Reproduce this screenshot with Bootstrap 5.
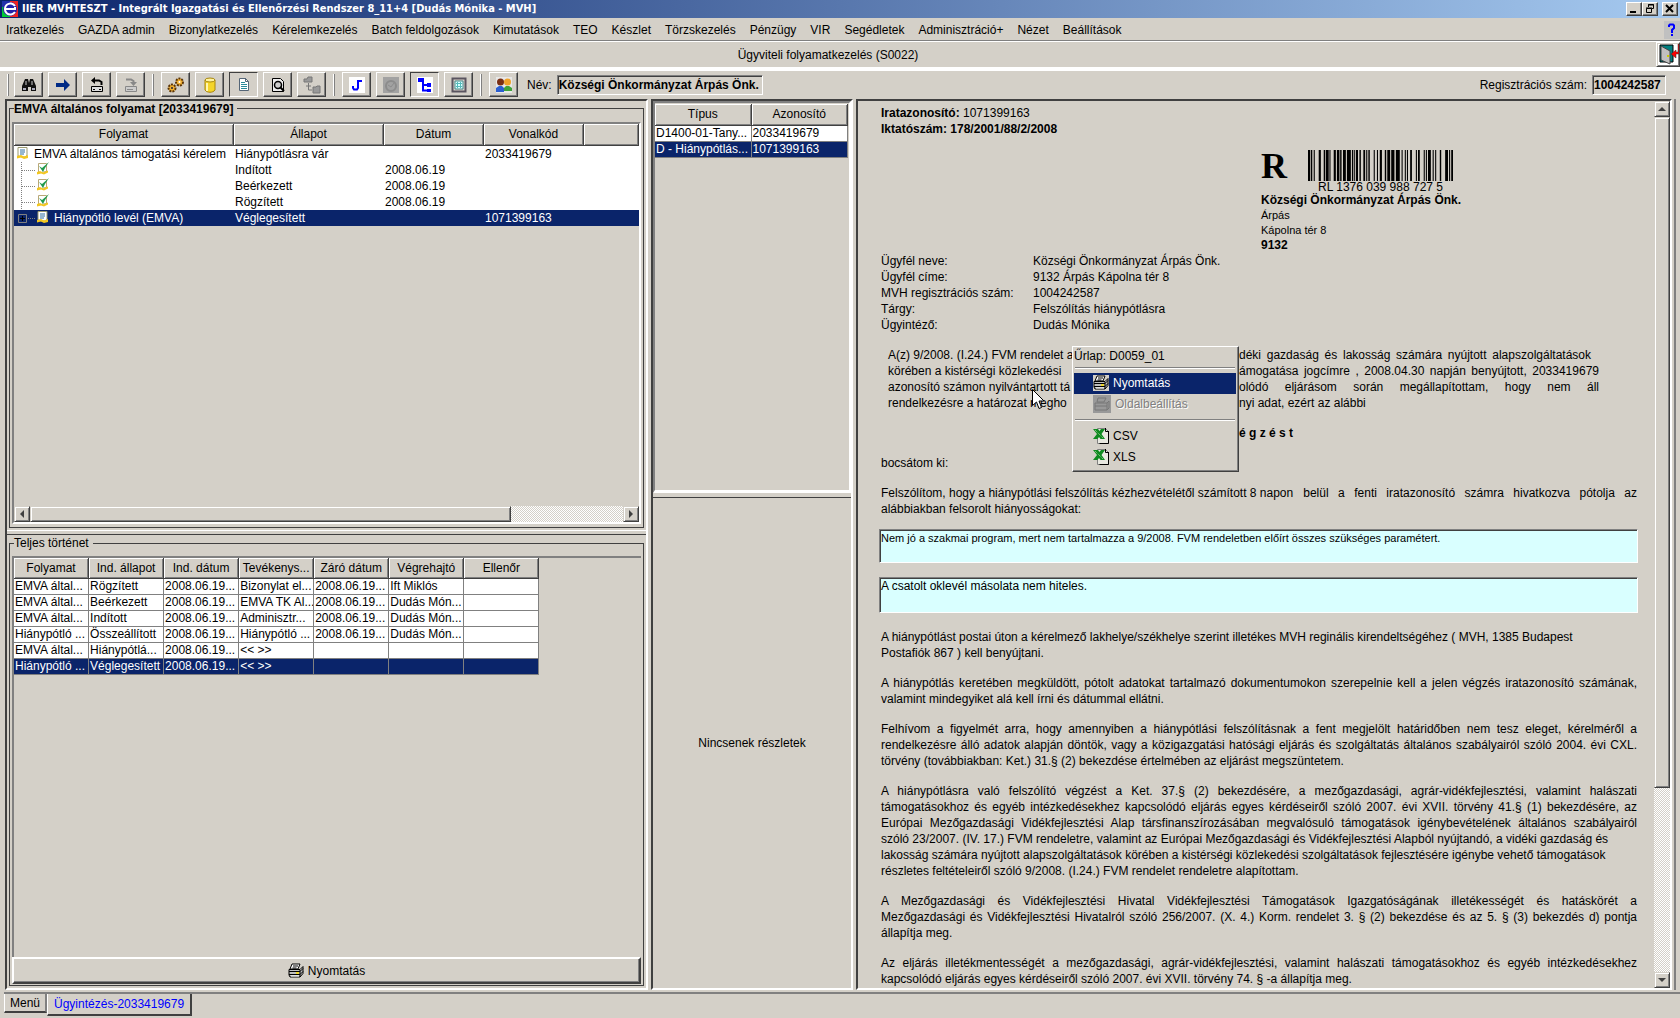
<!DOCTYPE html>
<html lang="hu">
<head>
<meta charset="utf-8">
<meta name="viewport" content="width=device-width, initial-scale=1">
<title>IIER MVHTESZT - Integrált Igazgatási és Ellenőrzési Rendszer</title>
<link href="https://cdn.jsdelivr.net/npm/bootstrap@5.3.0/dist/css/bootstrap.min.css" rel="stylesheet">
<style>
:root{--face:#d4d0c8;--dk:#404040;--sh:#808080;--sel:#0a246a}
body{background:var(--face);color:#000;font:12px/16px "Liberation Sans",Arial,sans-serif;cursor:default}
button,input{font:inherit;color:inherit;border-radius:0}
svg{display:block;flex:none}
a{color:inherit;text-decoration:none}
.titlebar{height:18px;background:linear-gradient(90deg,#0a246a,#a6caf0);color:#fff;font:bold 11px/18px "DejaVu Sans Condensed","DejaVu Sans",sans-serif;padding:0 2px}
.winbtn{width:16px;height:14px;padding:0;background:var(--face);border:1px solid;border-color:#fff var(--dk) var(--dk) #fff;box-shadow:inset -1px -1px var(--sh)}
.menubar{height:24px;padding-left:6px;border-bottom:1px solid #fff;box-shadow:inset 0 -1px var(--sh)}
.menubar nav{gap:14px}
.helpbtn{width:16px;height:18px;padding:0;border:0;background:#c0c0c0}
.subbar{height:29px;border-bottom:4px solid #fff}
.exitbtn{width:24px;height:25px;padding:0;background:#fff;border:1px solid;border-color:#fff var(--dk) var(--dk) #fff;box-shadow:inset 1px 1px var(--face),inset -1px -1px var(--sh)}
.toolbar{height:28px;margin:0 10px 0 7px;gap:5px}
.grip{width:2px;height:22px;border-left:1px solid #fff;border-right:1px solid var(--sh)}
.grip.mid{margin:0 2px}
.tbtn{width:29px;height:25px;padding:0;background:var(--face);border:1px solid;border-color:#fff var(--dk) var(--dk) #fff;box-shadow:inset -1px -1px var(--sh)}
.tbtn.down{border-color:var(--dk) #fff #fff var(--dk);box-shadow:none}
.sunk{border:1px solid;border-color:var(--sh) #fff #fff var(--sh);box-shadow:inset 1px 1px var(--dk)}
.roinput{height:20px;background:var(--face);font-weight:bold;padding:0 1px;min-width:0;outline:0}
.workarea{display:grid;grid-template-columns:minmax(0,643fr) minmax(0,202fr) minmax(0,816fr);column-gap:3px;margin:0 4px 0 5px;padding-right:2px;border-right:2px solid var(--sh);min-height:0}
.pane{border:2px solid;border-color:var(--dk) #fff #fff var(--dk);min-height:0;min-width:0}
.leftcol{display:grid;grid-template-rows:minmax(0,430fr) minmax(0,456fr)}
.leftcol .upper{border-bottom:1px solid #fff;padding:0 2px 2px}
.leftcol .upper fieldset{padding-bottom:3px}
.leftcol .lower{border-top:1px solid var(--dk);margin-top:3px;padding:0 2px 2px}
fieldset{border:1px solid var(--dk)!important;padding:0 2px 1px}
fieldset legend{float:none;width:auto;font-size:12px;line-height:16px;margin:0 0 5px 2px;padding:0 4px 0 0}
.well{border:2px solid;border-color:var(--sh) #fff #fff var(--sh);min-height:0}
.well.thin{border-width:2px 0 0 2px}
table{border-collapse:separate;border-spacing:0;table-layout:fixed}
th{height:21px;padding:0;font-weight:normal;text-align:center;white-space:nowrap;overflow:hidden;background:var(--face);border-right:1px solid var(--dk);border-bottom:1px solid var(--dk);box-shadow:inset 1px 1px #fff,inset -1px -1px var(--sh)}
td{height:16px;line-height:16px;padding:0 1px;background:#fff;white-space:nowrap;overflow:hidden}
tr.picked td{background:var(--sel);color:#fff}
.lined td{border-right:1px solid var(--sh);border-bottom:1px solid var(--sh);padding:0 0 0 1px;line-height:15px}
.tree th{height:22px}
.scr{background:repeating-conic-gradient(#fff 0 25%,var(--face) 0 50%) 0 0/2px 2px}
.sbtn,.thumb{background:var(--face);border:1px solid;border-color:var(--face) var(--dk) var(--dk) var(--face);box-shadow:inset 1px 1px #fff,inset -1px -1px var(--sh)}
.sbtn{width:16px;height:16px;padding:0}
.widebtn{height:27px;background:var(--face);border:2px solid;border-color:#fff var(--dk) var(--dk) #fff;box-shadow:inset -1px -1px var(--sh);padding:0;gap:4px}
.midcol{display:grid;grid-template-rows:minmax(0,392fr) minmax(0,495fr)}
.midcol .top{border:2px solid;border-color:var(--sh) #fff #fff var(--sh);border-bottom-width:3px;padding:1px 1px 0 0}
.midcol .top td{height:16px}
.midcol .top th{height:22px}
.midcol .bottom{border-top:1px solid var(--dk);margin-top:4px}
.sheet{padding:4px 17px 0 23px;overflow:hidden}
.sheet p{margin:0 0 14px}
.sheet .ln{display:block;white-space:nowrap}
.sheet .jl{display:block;text-align:justify;text-align-last:justify}
.sheet .inset{margin:0 38px 14px 7px}
.sheet .tail{width:360px;flex:none}
.address{margin-left:380px;margin-top:13px;line-height:15px;height:100px}
.bigr{font:bold 36px/32px "Liberation Serif","Times New Roman",serif;width:47px}
.sm11{font-size:11px}
dl.facts{display:grid;grid-template-columns:152px 1fr;margin:3px 0 14px}
dl.facts dt,dl.facts dd{margin:0;font-weight:normal}
.note{display:block;resize:none;overflow:hidden;background:#d9ffff;margin:0 -1px 14px -2px;width:calc(100% + 3px);height:34px;padding:0 1px;outline:0;line-height:16px}
.note.tall{height:36px;margin-bottom:16px}
.popmenu{left:214px;top:245px;width:167px;background:var(--face);border:1px solid;border-color:#fff var(--dk) var(--dk) #fff;box-shadow:inset -1px -1px var(--sh);padding:1px 2px 3px 1px;z-index:3}
.popmenu hr{margin:3px 1px;border:0;border-top:1px solid var(--sh);border-bottom:1px solid #fff;opacity:1}
.popmenu hr.wide{margin:4px 1px 5px}
.popmenu button{width:100%;height:21px;border:0;background:none;padding:0 0 0 19px;gap:4px}
.popmenu .hot{background:var(--sel);color:#fff}
.popmenu .off{color:var(--sh);text-shadow:1px 1px #fff}
.pointer{left:174px;top:288px;z-index:4}
.tabs{height:26px;margin-left:4px;border-top:2px solid var(--sh);margin-top:2px}
.tab{background:var(--face);border:solid;border-width:0 2px 2px 1px;border-color:var(--dk) var(--sh) var(--dk) #fff;padding:0 5px;height:19px}
.tab.on{height:22px;color:#00f;border-right-color:var(--dk);line-height:20px;padding:0 6px}
</style>
</head>
<body class="vh-100 d-flex flex-column overflow-hidden">
<svg width="0" height="0" class="position-absolute" aria-hidden="true">
 <symbol id="page" viewBox="0 0 11 12"><path d="M1 .5h9v8l-2 1.500H5L1 9z" fill="#fff" stroke="#9a9a70"/><path d="M3 3h5M3 5h5M3 7h4" stroke="#2f6fa0"/><path d="M0 9l4-1 3 1.500 4-1.500v3l-4 1-3-1.500-4 1z" fill="#f3c720"/></symbol>
 <symbol id="tick" viewBox="0 0 12 13"><path d="M1.500 1.500h8v8l-3 .5-5 1z" fill="#fff" stroke="#b9a878"/><path d="M0 10l3-1 3 1.500 5-2v2l-4 2-3-1-4 1z" fill="#f3c720"/><path d="M2 4l3 2 7-6-4 6-2 4z" fill="#1f9a4c"/></symbol>
 <symbol id="printer" viewBox="0 0 16 16"><path d="M4 1h8l-2 5H2z" fill="#fff" stroke="#000"/><path d="M5 3h5M4.500 5h4" stroke="#000"/><path d="M1 6.500h11l3-3v7l-3 3.500H2l-1-2z" fill="#c0c0c0" stroke="#000"/><path d="M1 8.500h11l3-3M1 11.500h11l3-3M12 7v7" stroke="#000" fill="none"/><path d="M3 13h8" stroke="#fff"/><path d="M8 10h3" stroke="#ffe000" stroke-width="1.500"/></symbol>
 <symbol id="excel" viewBox="0 0 16 16"><path d="M4.500.5h8l3 3v12h-11z" fill="#e8e8e0" stroke="#808080"/><path d="M15.500 3v12.500h-9M12.500 0v3.500h3" stroke="#000" fill="none"/><path d="M0 1h5l1.500 2L8 1h4L8.500 6l3.500 5H7.500L6 9l-1.500 2H0l4-5z" fill="#0f8a20"/><path d="M2 2l8 8" stroke="#9fd59a" stroke-dasharray="1 1"/></symbol>
</svg>

<header>
 <div class="titlebar d-flex align-items-center">
  <svg width="16" height="16" viewBox="0 0 16 16"><path d="M0 0h8v16H0z" fill="#0c3"/><path d="M8 0h8v16H8z" fill="#e22"/><path d="M0 0h8v6H0z" fill="#23a"/><circle cx="8" cy="8" r="7" fill="#22a"/><path d="M13 5A5.500 5.500 0 1 0 13 11M3 8h10V6" stroke="#fff" stroke-width="2" fill="none"/></svg>
  <span class="flex-grow-1 ps-1">IIER MVHTESZT - Integrált Igazgatási és Ellenőrzési Rendszer 8_11+4 [Dudás Mónika - MVH]</span>
  <button class="winbtn" aria-label="Kis méret"><svg width="14" height="12"><path d="M3 9h6" stroke="#000" stroke-width="2"/></svg></button>
  <button class="winbtn" aria-label="Előző méret"><svg width="14" height="12"><path d="M5.500 4V1.500h5v4H9M5 2h6M3.500 5.500h5v4h-5zM3 5h6" stroke="#000" fill="none"/></svg></button>
  <button class="winbtn ms-1" aria-label="Bezárás"><svg width="14" height="12"><path d="M3 2l7 7M10 2l-7 7" stroke="#000" stroke-width="2"/></svg></button>
 </div>
 <div class="menubar d-flex align-items-center justify-content-between">
  <nav class="d-flex"><a href="#">Iratkezelés</a><a href="#">GAZDA admin</a><a href="#">Bizonylatkezelés</a><a href="#">Kérelemkezelés</a><a href="#">Batch feldolgozások</a><a href="#">Kimutatások</a><a href="#">TEO</a><a href="#">Készlet</a><a href="#">Törzskezelés</a><a href="#">Pénzügy</a><a href="#">VIR</a><a href="#">Segédletek</a><a href="#">Adminisztráció+</a><a href="#">Nézet</a><a href="#">Beállítások</a></nav>
  <button class="helpbtn" aria-label="Súgó"><svg width="16" height="18"><path d="M5 6V4.500l1-1h3l1 1V7L8 9v3M8 13v2" stroke="#00f" stroke-width="2" fill="none"/></svg></button>
 </div>
 <div class="subbar d-flex align-items-center">
  <div class="flex-grow-1 text-center">Ügyviteli folyamatkezelés (S0022)</div>
  <button class="exitbtn" aria-label="Kilépés"><svg width="22" height="23"><path d="M3 2h13v17H3z" fill="#008080" stroke="#000"/><path d="M4 3l9 5v13l-9-4z" fill="#c0c0c0" stroke="#444"/><path d="M10 13h2" stroke="#cc0" stroke-width="2"/><path d="M14 11l5-4v2h2V1h1v10h-3v4z" fill="#f00" stroke="#333" stroke-width=".5"/></svg></button>
 </div>
</header>

<div class="toolbar d-flex align-items-center" role="toolbar">
 <span class="grip"></span>
 <button class="tbtn" aria-label="Keresés"><svg class="m-auto" width="16" height="16"><path d="M4 2h3l1 4 1-4h3l3 7v5h-5v-4H7v4H1V9z" fill="#111"/><path d="M2 11h3v2H2zM11 11h3v2h-3z" fill="#aab"/><path d="M5 4v4M11 4v4" stroke="#ccc"/></svg></button>
 <button class="tbtn" aria-label="Tovább"><svg class="m-auto" width="16" height="16"><path d="M1 6h8V2l6 6-6 6v-4H1z" fill="#002a86"/></svg></button>
 <button class="tbtn" aria-label="Betöltés"><svg class="m-auto" width="16" height="16"><path d="M2.500 9.500h11v5h-11z" fill="#ddd" stroke="#000"/><path d="M12.500 8V5L10 3.500H5" stroke="#000" stroke-width="2" fill="none"/><path d="M6 0v7L2 3.500z"/><path d="M4 12.500h2M10 12.500h2" stroke="#000"/></svg></button>
 <button class="tbtn" aria-label="Mentés" disabled><svg class="m-auto" width="16" height="16"><path d="M2.500 9.500h11v5h-11z" fill="#ccc" stroke="#888"/><path d="M3 2.500h5L10.500 4v2" stroke="#888" stroke-width="2" fill="none"/><path d="M7 5h7l-3.500 4z" fill="#888"/><path d="M4 12.500h6" stroke="#888"/></svg></button>
 <span class="grip mid"></span>
 <button class="tbtn" aria-label="Műveletek"><svg class="m-auto" width="18" height="16"><g fill="#f0b030" stroke="#5a3408"><circle cx="12.500" cy="5" r="3.500" stroke-width="2" stroke-dasharray="2 1"/><circle cx="5" cy="11" r="3.500" stroke-width="2" stroke-dasharray="2 1"/></g><circle cx="12.500" cy="5" r="1" fill="#fff"/><circle cx="5" cy="11" r="1" fill="#223"/></svg></button>
 <button class="tbtn" aria-label="Adattár"><svg class="m-auto" width="16" height="16"><path d="M3 3v10c2 3 8 3 10 0V3z" fill="#f5d52a" stroke="#a8860c"/><ellipse cx="8" cy="3" rx="5" ry="2" fill="#fff3a0" stroke="#a8860c"/><path d="M5 6v8" stroke="#fff6b0" stroke-width="2"/></svg></button>
 <button class="tbtn down" aria-label="Dokumentum"><svg class="m-auto" width="16" height="16"><path d="M3.500 1.500h6l3 3v9h-9z" fill="#fff" stroke="#567"/><path d="M5 5.500h4M5 7.500h6M5 9.500h6M5 11.500h6" stroke="#2a8a9a"/><path d="M9.500 1v3.500h3" stroke="#567" fill="none"/></svg></button>
 <button class="tbtn" aria-label="Előnézet"><svg class="m-auto" width="16" height="16"><path d="M2.500 1.500h8l3 3v10h-11z" fill="#eee" stroke="#000"/><circle cx="8" cy="8" r="3.500" fill="#ccc" stroke="#000" stroke-width="1.500"/><path d="M10 10l4 4" stroke="#000" stroke-width="2"/></svg></button>
 <button class="tbtn" aria-label="Kapcsolatok" disabled><svg class="m-auto" width="18" height="18"><path d="M1 3h3l1-2h4v5H1zM10 11h3l1-1h3v7h-7z" fill="#999" stroke="#777"/><path d="M5.500 7v7H9M3 10h5" stroke="#777" fill="none"/></svg></button>
 <span class="grip mid"></span>
 <button class="tbtn" aria-label="Folyamatlépés"><svg class="m-auto" width="16" height="16"><path d="M0 0h16v16H0z" fill="#fff"/><path d="M13 4H9v7l-1 1.500H5L4 11V9" stroke="#00f" stroke-width="2" fill="none"/></svg></button>
 <button class="tbtn" aria-label="Határidő" disabled><svg class="m-auto" width="16" height="16"><path d="M0 0h16v16H0z" fill="#a2a2a2"/><circle cx="8" cy="9" r="5" fill="none" stroke="#8c8c8c" stroke-width="2"/><path d="M5 8l3 2 3-4" stroke="#8c8c8c" fill="none"/></svg></button>
 <button class="tbtn down" aria-label="Fa nézet"><svg class="m-auto" width="16" height="16"><path d="M0 0h16v16H0z" fill="#fff"/><path d="M1 1h6v4H1zM10 6h4v4h-4zM10 12h4v3h-4z" fill="#00f"/><path d="M6 4v9.500h4M6 8h4" stroke="#00f" stroke-width="2" fill="none"/></svg></button>
 <button class="tbtn" aria-label="Táblázat"><svg class="m-auto" width="16" height="16"><path d="M1.500 1.500h13v13h-13z" fill="#d8d0c8" stroke="#5a5560" stroke-width="2"/><path d="M4 4h8v8H4z" fill="#d9ffff" stroke="#488"/><path d="M5 6.500h6M5 9.500h6M6.500 5v6M9.500 5v6" stroke="#5bb"/></svg></button>
 <span class="grip mid"></span>
 <button class="tbtn" aria-label="Ügyfelek"><svg class="m-auto" width="16" height="16"><path d="M0 0h16v16H0z" fill="#e8e8e8"/><circle cx="4.500" cy="5" r="3.500" fill="#7a2f14"/><circle cx="11.500" cy="5" r="3.500" fill="#f0a22a"/><path d="M0 15v-4l3-2h3l2 2v4z" fill="#2c5fd0"/><path d="M8 14v-3l2-2h3l3 2v3z" fill="#3fa33a"/></svg></button>
 <label for="nev" class="ps-1">Név:</label>
 <input id="nev" class="roinput sunk" size="28" style="width:206px" readonly value="Községi Önkormányzat Árpás Önk.">
 <label for="reg" class="ms-auto">Regisztrációs szám:</label>
 <input id="reg" class="roinput sunk me-1" size="10" style="width:74px" readonly value="1004242587">
</div>

<main class="workarea flex-grow-1">
 <section class="pane leftcol">
  <div class="upper d-flex">
   <fieldset class="flex-grow-1 d-flex flex-column">
    <legend class="fw-bold">EMVA általános folyamat [2033419679]</legend>
    <div class="well flex-grow-1 d-flex flex-column">
     <table class="tree w-100">
      <colgroup><col style="width:35.200%"><col style="width:24%"><col style="width:16%"><col style="width:16%"><col></colgroup>
      <thead><tr><th>Folyamat</th><th>Állapot</th><th>Dátum</th><th>Vonalkód</th><th></th></tr></thead>
      <tbody>
       <tr><td><div class="d-flex"><svg width="19" height="16"><use href="#page" x="2" y="1" width="11" height="12"/></svg>EMVA általános támogatási kérelem</div></td><td>Hiánypótlásra vár</td><td></td><td>2033419679</td><td></td></tr>
       <tr><td><svg width="36" height="16"><path d="M6.500 0v16M7 8.500h14" stroke="#808080" stroke-dasharray="1 1"/><use href="#tick" x="22" y="0" width="12" height="13"/></svg></td><td>Indított</td><td>2008.06.19</td><td></td><td></td></tr>
       <tr><td><svg width="36" height="16"><path d="M6.500 0v16M7 8.500h14" stroke="#808080" stroke-dasharray="1 1"/><use href="#tick" x="22" y="0" width="12" height="13"/></svg></td><td>Beérkezett</td><td>2008.06.19</td><td></td><td></td></tr>
       <tr><td><svg width="36" height="16"><path d="M6.500 0v16M7 8.500h14" stroke="#808080" stroke-dasharray="1 1"/><use href="#tick" x="22" y="0" width="12" height="13"/></svg></td><td>Rögzített</td><td>2008.06.19</td><td></td><td></td></tr>
       <tr class="picked"><td><div class="d-flex"><svg width="39" height="16"><path d="M3.500 4.500h8v8h-8z" fill="#0a246a" stroke="#808080"/><path d="M5 8.500h5M7.500 6v5" stroke="#000" fill="none"/><path d="M13 8.500h8" stroke="#808080" stroke-dasharray="1 1"/><use href="#page" x="22" y="1" width="11" height="12"/></svg>Hiánypótló levél (EMVA)</div></td><td>Véglegesített</td><td></td><td>1071399163</td><td></td></tr>
      </tbody>
     </table>
     <div class="scr mt-auto d-flex">
      <button class="sbtn" aria-label="Balra"><svg width="14" height="14"><path d="M9 3v8L5 7z" fill="#404040"/></svg></button>
      <div class="thumb" style="width:77%"></div>
      <button class="sbtn ms-auto" aria-label="Jobbra"><svg width="14" height="14"><path d="M5 3v8l4-4z" fill="#404040"/></svg></button>
     </div>
    </div>
   </fieldset>
  </div>
  <div class="lower d-flex">
   <fieldset class="flex-grow-1 d-flex flex-column">
    <legend>Teljes történet</legend>
    <div class="well thin flex-grow-1">
     <table class="lined" style="width:83.800%">
      <thead><tr><th>Folyamat</th><th>Ind. állapot</th><th>Ind. dátum</th><th>Tevékenys...</th><th>Záró dátum</th><th>Végrehajtó</th><th>Ellenőr</th></tr></thead>
      <tbody>
       <tr><td>EMVA által...</td><td>Rögzített</td><td>2008.06.19...</td><td>Bizonylat el...</td><td>2008.06.19...</td><td>Ift Miklós</td><td></td></tr>
       <tr><td>EMVA által...</td><td>Beérkezett</td><td>2008.06.19...</td><td>EMVA TK Al...</td><td>2008.06.19...</td><td>Dudás Món...</td><td></td></tr>
       <tr><td>EMVA által...</td><td>Indított</td><td>2008.06.19...</td><td>Adminisztr...</td><td>2008.06.19...</td><td>Dudás Món...</td><td></td></tr>
       <tr><td>Hiánypótló ...</td><td>Összeállított</td><td>2008.06.19...</td><td>Hiánypótló ...</td><td>2008.06.19...</td><td>Dudás Món...</td><td></td></tr>
       <tr><td>EMVA által...</td><td>Hiánypótlá...</td><td>2008.06.19...</td><td>&lt;&lt; &gt;&gt;</td><td></td><td></td><td></td></tr>
       <tr class="picked"><td>Hiánypótló ...</td><td>Véglegesített</td><td>2008.06.19...</td><td>&lt;&lt; &gt;&gt;</td><td></td><td></td><td></td></tr>
      </tbody>
     </table>
    </div>
    <button class="widebtn w-100 d-flex align-items-center justify-content-center"><svg width="16" height="16"><use href="#printer"/></svg>Nyomtatás</button>
   </fieldset>
  </div>
 </section>

 <section class="pane midcol">
  <div class="top">
   <table class="w-100 lined">
    <thead><tr><th>Típus</th><th>Azonosító</th></tr></thead>
    <tbody><tr><td>D1400-01-Tany...</td><td>2033419679</td></tr><tr class="picked"><td>D - Hiánypótlás...</td><td>1071399163</td></tr></tbody>
   </table>
  </div>
  <div class="bottom d-flex align-items-center justify-content-center">Nincsenek részletek</div>
 </section>

 <section class="pane d-flex position-relative">
  <article class="sheet flex-grow-1">
   <div><b>Iratazonosító:</b> 1071399163<br><b>Iktatószám: 178/2001/88/2/2008</b></div>
   <div class="address">
    <div class="d-flex">
     <div class="bigr">R</div>
     <div>
      <svg width="145" height="31" viewBox="524 0 406 10" preserveAspectRatio="none"><path d="M524 0h6v10h-6zM532 0h4v10h-4zM540 0h3v10h-3zM554 0h6v10h-6zM568 0h4v10h-4zM574 0h8v10h-8zM584 0h3v10h-3zM596 0h6v10h-6zM605 0h7v10h-7zM614 0h4v10h-4zM622 0h8v10h-8zM633 0h11v10h-11zM647 0h3v10h-3zM652 0h3v10h-3zM658 0h6v10h-6zM668 0h4v10h-4zM679 0h5v10h-5zM687 0h3v10h-3zM693 0h4v10h-4zM708 0h3v10h-3zM717 0h3v10h-3zM725 0h6v10h-6zM739 0h4v10h-4zM746 0h8v10h-8zM757 0h9v10h-9zM770 0h11v10h-11zM786 0h3v10h-3zM795 0h3v10h-3zM801 0h3v10h-3zM810 0h5v10h-5zM826 0h3v10h-3zM832 0h5v10h-5zM848 0h3v10h-3zM854 0h3v10h-3zM860 0h8v10h-8zM873 0h3v10h-3zM880 0h3v10h-3zM893 0h4v10h-4zM908 0h8v10h-8zM919 0h3v10h-3zM925 0h5v10h-5z"/></svg>
      <div class="text-center lh-1">RL 1376 039 988 727 5</div>
     </div>
    </div>
    <div class="fw-bold">Községi Önkormányzat Árpás Önk.</div>
    <div class="sm11">Árpás</div>
    <div class="sm11">Kápolna tér 8</div>
    <div class="fw-bold">9132</div>
   </div>
   <dl class="facts">
    <dt>Ügyfél neve:</dt><dd>Községi Önkormányzat Árpás Önk.</dd>
    <dt>Ügyfél címe:</dt><dd>9132 Árpás Kápolna tér 8</dd>
    <dt>MVH regisztrációs szám:</dt><dd>1004242587</dd>
    <dt>Tárgy:</dt><dd>Felszólítás hiánypótlásra</dd>
    <dt>Ügyintéző:</dt><dd>Dudás Mónika</dd>
   </dl>
   <div class="inset">
    <div class="d-flex justify-content-between"><span class="ln">A(z) 9/2008. (I.24.) FVM rendelet a</span><span class="jl tail pe-2">déki gazdaság és lakosság számára nyújtott alapszolgáltatások</span></div>
    <div class="d-flex justify-content-between"><span class="ln">körében a kistérségi közlekedési</span><span class="jl tail">ámogatása jogcímre , 2008.04.30 napján benyújtott, 2033419679</span></div>
    <div class="d-flex justify-content-between"><span class="ln">azonosító számon nyilvántartott tá</span><span class="jl tail">olódó eljárásom során megállapítottam, hogy nem áll</span></div>
    <div class="d-flex justify-content-between"><span class="ln">rendelkezésre a határozat megho</span><span class="ln tail">nyi adat, ezért az alábbi</span></div>
   </div>
   <div class="inset d-flex justify-content-end fw-bold"><span class="tail">é g z é s t</span></div>
   <p>bocsátom ki:</p>
   <p class="mb-2 pb-1"><span class="d-flex"><span class="ln">Felszólítom, hogy a hiánypótlási felszólítás kézhezvételétől számított 8 napon&nbsp;&nbsp;&nbsp;</span><span class="jl flex-grow-1">belül a fenti iratazonosító számra hivatkozva pótolja az</span></span>
    <span class="ln">alábbiakban felsorolt hiányosságokat:</span></p>
   <textarea class="note sunk sm11" readonly aria-label="Első hiányosság">Nem jó a szakmai program, mert nem tartalmazza a 9/2008. FVM rendeletben előírt összes szükséges paramétert.</textarea>
   <textarea class="note tall sunk" readonly aria-label="Második hiányosság">A csatolt oklevél másolata nem hiteles.</textarea>
   <p><span class="ln">A hiánypótlást postai úton a kérelmező lakhelye/székhelye szerint illetékes MVH reginális kirendeltségéhez ( MVH, 1385 Budapest</span>
    <span class="ln">Postafiók 867 ) kell benyújtani.</span></p>
   <p><span class="jl">A hiánypótlás keretében megküldött, pótolt adatokat tartalmazó dokumentumokon szerepelnie kell a jelen végzés iratazonosító számának,</span>
    <span class="ln">valamint mindegyiket alá kell írni és dátummal ellátni.</span></p>
   <p><span class="jl">Felhívom a figyelmét arra, hogy amennyiben a hiánypótlási felszólításnak a fent megjelölt határidőben nem tesz eleget, kérelméről a</span>
    <span class="jl">rendelkezésre álló adatok alapján döntök, vagy a közigazgatási hatósági eljárás és szolgáltatás általános szabályairól szóló 2004. évi CXL.</span>
    <span class="ln">törvény (továbbiakban: Ket.) 31.§ (2) bekezdése értelmében az eljárást megszüntetem.</span></p>
   <p><span class="jl">A hiánypótlásra való felszólító végzést a Ket. 37.§ (2) bekezdésére, a mezőgazdasági, agrár-vidékfejlesztési, valamint halászati</span>
    <span class="jl">támogatásokhoz és egyéb intézkedésekhez kapcsolódó eljárás egyes kérdéseiről szóló 2007. évi XVII. törvény 41.§ (1) bekezdésére, az</span>
    <span class="jl">Európai Mezőgazdasági Vidékfejlesztési Alap társfinanszírozásában megvalósuló támogatások igénybevételének általános szabályairól</span>
    <span class="ln">szóló 23/2007. (IV. 17.) FVM rendeletre, valamint az Európai Mezőgazdasági és Vidékfejlesztési Alapból nyújtandó, a vidéki gazdaság és</span>
    <span class="ln">lakosság számára nyújtott alapszolgáltatások körében a kistérségi közlekedési szolgáltatások fejlesztésére igénybe vehető támogatások</span>
    <span class="ln">részletes feltételeiről szóló 9/2008. (I.24.) FVM rendelet rendeletre alapítottam.</span></p>
   <p><span class="jl">A Mezőgazdasági és Vidékfejlesztési Hivatal Vidékfejlesztési Támogatások Igazgatóságának illetékességét és hatáskörét a</span>
    <span class="jl">Mezőgazdasági és Vidékfejlesztési Hivatalról szóló 256/2007. (X. 4.) Korm. rendelet 3. § (2) bekezdése és az 5. § (3) bekezdés d) pontja</span>
    <span class="ln">állapítja meg.</span></p>
   <p><span class="jl">Az eljárás illetékmentességét a mezőgazdasági, agrár-vidékfejlesztési, valamint halászati támogatásokhoz és egyéb intézkedésekhez</span>
    <span class="ln">kapcsolódó eljárás egyes kérdéseiről szóló 2007. évi XVII. törvény 74. § -a állapítja meg.</span></p>
  </article>
  <div class="scr d-flex flex-column">
   <button class="sbtn" aria-label="Fel"><svg width="14" height="14"><path d="M3 9h8L7 5z" fill="#404040"/></svg></button>
   <div class="thumb" style="height:75.600%"></div>
   <button class="sbtn mt-auto" aria-label="Le"><svg width="14" height="14"><path d="M3 5h8L7 9z" fill="#404040"/></svg></button>
  </div>
  <div class="popmenu position-absolute" role="menu">
   <div>Űrlap: D0059_01</div>
   <hr>
   <button class="hot d-flex align-items-center mt-1"><svg width="16" height="16"><path d="M0 0h16v16H0z" fill="#d4d0c8"/><use href="#printer"/></svg>Nyomtatás</button>
   <button class="off d-flex align-items-center" disabled><svg width="18" height="18"><path d="M0 0h18v18H0z" fill="#999"/><path d="M5 3h8l-2 4H4zM2 8h12v7H2zM2 11h12M14 8l2-2v7l-2 2" stroke="#777" fill="none"/></svg>Oldalbeállítás</button>
   <hr class="wide">
   <button class="d-flex align-items-center"><svg width="16" height="16"><use href="#excel"/></svg>CSV</button>
   <button class="d-flex align-items-center"><svg width="16" height="16"><use href="#excel"/></svg>XLS</button>
  </div>
  <svg class="pointer position-absolute" width="13" height="21"><path d="M.5.5v16l4-3.500 2.500 6.500 2.500-1-2.500-6.500h5z" fill="#fff" stroke="#000"/></svg>
 </section>
</main>

<footer class="tabs d-flex align-items-start">
 <button class="tab">Menü</button><button class="tab on">Ügyintézés-2033419679</button>
</footer>
<script src="https://cdn.jsdelivr.net/npm/bootstrap@5.3.0/dist/js/bootstrap.bundle.min.js"></script>
</body>
</html>
